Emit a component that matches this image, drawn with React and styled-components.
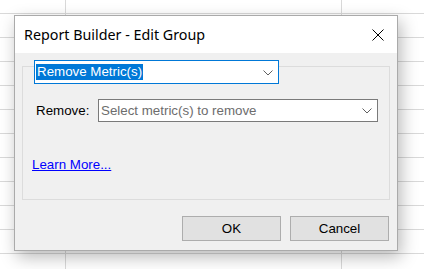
import React from 'react';
import styled, { createGlobalStyle } from 'styled-components';

const Global = createGlobalStyle`
  html, body { margin: 0; padding: 0; }
  body {
    width: 424px;
    height: 269px;
    overflow: hidden;
    background-color: #ffffff;
    background-image:
      linear-gradient(to right, transparent 65px, #d9d9d9 65px, #d9d9d9 66px, transparent 66px, transparent 341px, #d9d9d9 341px, #d9d9d9 342px, transparent 342px),
      repeating-linear-gradient(to bottom, transparent 0, transparent 13px, #d9d9d9 13px, #d9d9d9 14px, transparent 14px, transparent 24px);
    font-family: "Liberation Sans", Arial, sans-serif;
  }
`;

const Desktop = styled.div`
  padding: 15px 0 0 14px;
`;

const Window = styled.div`
  box-sizing: border-box;
  width: 384px;
  height: 236px;
  border: 1px solid #aaaaaa;
  display: flex;
  flex-direction: column;
  background: #f0f0f0;
  box-shadow: 3px 6px 16px rgba(0, 0, 0, 0.28);
`;

const TitleBar = styled.div`
  height: 37px;
  flex: none;
  background: #ffffff;
  display: flex;
  align-items: center;
  justify-content: space-between;
  padding: 0 13px 0 9px;
`;

const Title = styled.div`
  font-family: "Noto Sans", "Segoe UI", sans-serif;
  font-size: 14.3px;
  color: #000;
`;

const CloseIcon = styled.svg`
  width: 12px;
  height: 12px;
  display: block;
`;

const Body = styled.div`
  flex: 1;
  display: flex;
  flex-direction: column;
  padding: 13px 7px 0 7px;
`;

const GroupBox = styled.div`
  box-sizing: border-box;
  height: 134px;
  border: 1px solid #dcdcdc;
  display: flex;
  flex-direction: column;
  align-items: flex-start;
`;

const Combo = styled.div`
  box-sizing: border-box;
  width: ${(p) => p.$width}px;
  height: ${(p) => p.$height}px;
  border: 1px solid ${(p) => (p.$focused ? '#0078d7' : '#7a7a7a')};
  background: #ffffff;
  display: flex;
  align-items: center;
  justify-content: space-between;
  padding: 0 5px 0 ${(p) => (p.$focused ? 1 : 2)}px;
  font-size: 13.33px;
`;

const MainCombo = styled(Combo)`
  margin: -7px 0 0 11px;
`;

const Selected = styled.span`
  background: #0078d7;
  color: #ffffff;
  line-height: 16px;
  padding: 0 1px;
`;

const Placeholder = styled.span`
  color: #6d6d6d;
  line-height: 16px;
`;

const Chevron = styled.svg`
  width: 10px;
  height: 6px;
  display: block;
  margin-top: 1px;
`;

const FieldRow = styled.div`
  display: flex;
  align-items: center;
  margin: 15px 0 0 13px;
`;

const Label = styled.label`
  width: 62px;
  font-size: 13.33px;
  color: #000;
`;

const Link = styled.a`
  margin: 35px 0 0 9px;
  font-size: 13.33px;
  line-height: 16px;
  color: #0000ff;
  text-decoration: underline;
  cursor: pointer;
`;

const ButtonRow = styled.div`
  display: flex;
  justify-content: flex-end;
  gap: 9px;
  margin-top: 16px;
  padding-right: 1px;
`;

const Button = styled.button`
  box-sizing: border-box;
  width: 99px;
  height: 25px;
  border: 1px solid #adadad;
  background: #e1e1e1;
  font-family: "Liberation Sans", Arial, sans-serif;
  font-size: 13.33px;
  color: #000;
  padding: 0;
  border-radius: 0;
`;

const ChevronIcon = () => (
  <Chevron viewBox="0 0 10 6">
    <path d="M0.5 0.5 L5 5 L9.5 0.5" fill="none" stroke="#606060" strokeWidth="1" />
  </Chevron>
);

export default function App() {
  return (
    <>
      <Global />
      <Desktop>
        <Window>
          <TitleBar>
            <Title>Report Builder - Edit Group</Title>
            <CloseIcon viewBox="0 0 12 12">
              <path d="M0.5 0.5 L11.5 11.5 M11.5 0.5 L0.5 11.5" stroke="#000" strokeWidth="1" fill="none" />
            </CloseIcon>
          </TitleBar>
          <Body>
            <GroupBox>
              <MainCombo $width={245} $height={24} $focused>
                <Selected>Remove Metric(s)</Selected>
                <ChevronIcon />
              </MainCombo>
              <FieldRow>
                <Label>Remove:</Label>
                <Combo $width={280} $height={23}>
                  <Placeholder>Select metric(s) to remove</Placeholder>
                  <ChevronIcon />
                </Combo>
              </FieldRow>
              <Link>Learn More...</Link>
            </GroupBox>
            <ButtonRow>
              <Button>OK</Button>
              <Button>Cancel</Button>
            </ButtonRow>
          </Body>
        </Window>
      </Desktop>
    </>
  );
}
